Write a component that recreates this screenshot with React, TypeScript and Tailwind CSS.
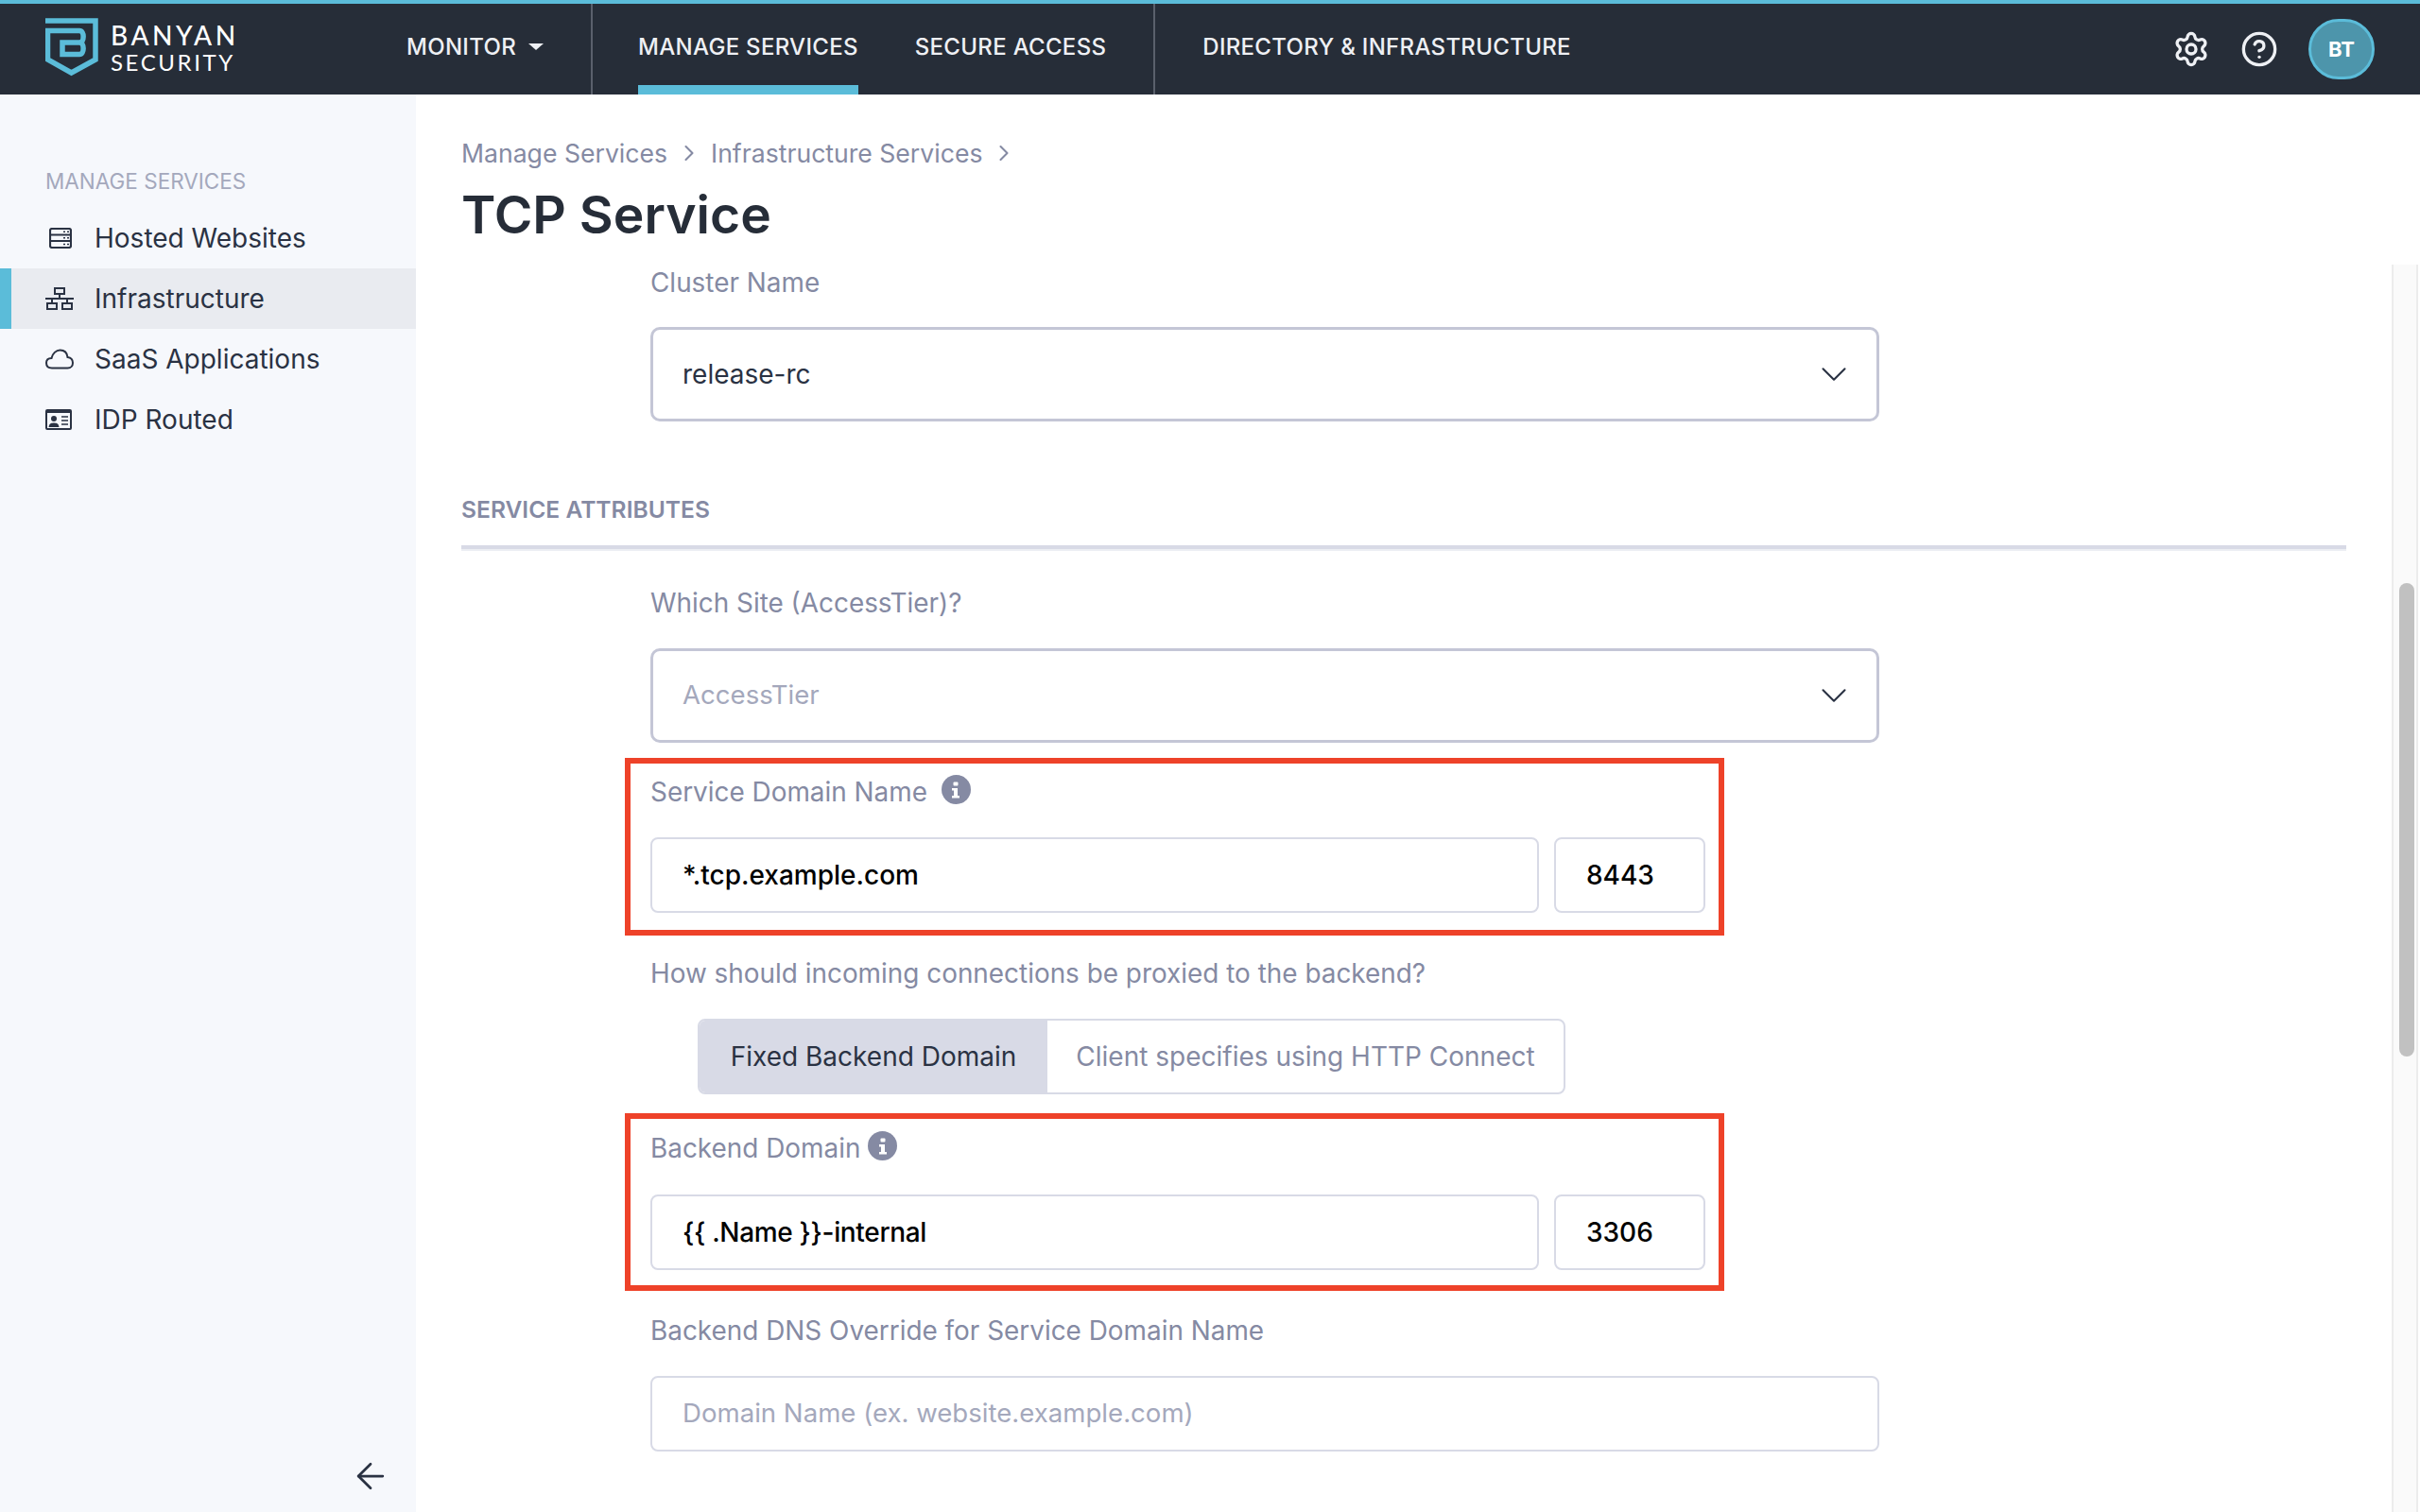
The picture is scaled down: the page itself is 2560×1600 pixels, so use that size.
import React from "react";
import { ChevronDown, ChevronRight, ArrowLeft, Settings, CircleHelp } from "lucide-react";

function Logo() {
  return (
    <svg width="56" height="62" viewBox="0 0 56 62" fill="none" className="shrink-0">
      <path d="M0 3H53V44L27.500 58L2.500 44V11" stroke="#5bbcd9" strokeWidth="5.500" fill="none" />
      <path d="M0 13.500H36C41.500 13.500 41.500 26 36 26H18V38.500H36C41.500 38.500 41.500 26 36 26" stroke="#5bbcd9" strokeWidth="5.500" fill="none" />
    </svg>
  );
}

function ServerIcon() {
  return (
    <svg width="24" height="22" viewBox="0 0 24 22" fill="none" stroke="#2a3243" strokeWidth="2.200" className="ml-[4px]">
      <rect x="1" y="1" width="22" height="20" rx="2" />
      <path d="M1 7.500H23M1 14H23" />
      <path d="M15 4.200h2M19 4.200h2M15 10.800h2M19 10.800h2M15 17.500h2M19 17.500h2" strokeWidth="1.600" />
    </svg>
  );
}

function NetworkIcon() {
  return (
    <svg width="30" height="24" viewBox="0 0 30 24" fill="none" stroke="#2a3243" strokeWidth="2">
      <rect x="10" y="1" width="10" height="6" />
      <rect x="2" y="17" width="10" height="6" />
      <rect x="18" y="17" width="10" height="6" />
      <path d="M15 7V12M0 12H30M7 12V17M23 12V17" />
    </svg>
  );
}

function CloudIcon() {
  return (
    <svg width="30" height="22" viewBox="0 0 30 22" fill="none" stroke="#2a3243" strokeWidth="2">
      <path d="M7 20.500C3 20.500 1 18 1 15C1 12 3 10 6.500 10C7.500 5 11.500 1.500 15.500 1.500C20 1.500 23 4.500 23.500 9C27 9.500 29 12 29 15C29 18 27 20.500 23.500 20.500Z" />
    </svg>
  );
}

function IdIcon() {
  return (
    <svg width="28" height="22" viewBox="0 0 28 22">
      <path fillRule="evenodd" fill="#2a3243" d="M2 0H26A2 2 0 0 1 28 2V20A2 2 0 0 1 26 22H2A2 2 0 0 1 0 20V2A2 2 0 0 1 2 0ZM2 4V20H26V4Z" />
      <circle cx="9" cy="10" r="3" fill="#2a3243" />
      <path d="M3.500 19C4 15 6.500 14.500 9 14.500S14 15 14.500 19Z" fill="#2a3243" />
      <path d="M17 8H24M17 12H24M17 16H24" stroke="#2a3243" strokeWidth="1.600" />
    </svg>
  );
}

function InfoDot() {
  return (
    <span className="flex h-[31px] w-[31px] shrink-0 items-center justify-center rounded-full bg-[#858aa3]">
      <svg width="12" height="18" viewBox="0 0 12 18" fill="#fff">
        <rect x="3.500" y="0.500" width="5" height="4" rx="1" />
        <path d="M2 7H8V15H10V17.500H2V15H4V9.500H2Z" />
      </svg>
    </span>
  );
}

function NavItem({ label, active }: { label: string; active?: boolean }) {
  return (
    <div className="relative flex h-full items-center whitespace-nowrap pb-[5px] text-[24px] font-medium tracking-[0.3px] text-[#eef0f4]">
      {label}
      {active && <span className="absolute inset-x-0 bottom-0 h-[10px] bg-[#5bbcd9]" />}
    </div>
  );
}

function SideItem({ icon, label, active }: { icon: React.ReactNode; label: string; active?: boolean }) {
  return (
    <div className={`flex h-16 items-center ${active ? "bg-[#e9ebf0]" : ""}`}>
      <span className={`h-full w-3 shrink-0 ${active ? "bg-[#5bbcd9]" : ""}`} />
      <span className="flex w-[88px] shrink-0 items-center pl-9">{icon}</span>
      <span className="text-[28px] text-[#2a3243]">{label}</span>
    </div>
  );
}

function Label({ children }: { children: React.ReactNode }) {
  return <div className="text-[27.900px] leading-[36px] text-[#858aa3]">{children}</div>;
}

function Select({ value, placeholder }: { value: string; placeholder?: boolean }) {
  return (
    <div className={`flex h-[100px] w-[1300px] items-center justify-between rounded-[10px] border-[3px] border-[#c4c6d6] pl-[31px] pr-[22px] ${placeholder ? "text-[27.600px] text-[#a4a8bc]" : "text-[28px] text-[#2a3243]"}`}>
      <span>{value}</span>
      <ChevronDown size={46} strokeWidth={1.100} className="text-[#2a3243]" />
    </div>
  );
}

function Field({ value, className }: { value: string; className: string }) {
  return (
    <div className={`flex h-[80px] items-center rounded-[8px] border-2 border-[#d8dae6] pl-[32px] text-[28px] font-medium text-black ${className}`}>
      {value}
    </div>
  );
}

function RedBox({ info, value, port, className, valueClass }: { info: React.ReactNode; value: string; port: string; className: string; valueClass: string }) {
  return (
    <div className={`ml-[173px] flex h-[188px] w-[1163px] flex-col border-[6px] border-[#ee4229] pl-[21px] ${className}`}>
      {info}
      <div className="flex gap-4">
        <Field value={value} className={`w-[940px] ${valueClass}`} />
        <Field value={port} className="w-[160px]" />
      </div>
    </div>
  );
}

export default function App() {
  return (
    <div className="flex h-[1600px] w-[2560px] flex-col overflow-hidden bg-white font-['Inter',sans-serif]">
      <header className="flex h-[100px] shrink-0 items-stretch border-t-4 border-[#5bbcd9] bg-[#262d38]">
        <div className="flex w-[430px] shrink-0 items-center gap-[13px] pb-[5px] pl-[48px]">
          <Logo />
          <div className="pt-[2px] font-['Lato',sans-serif] text-white">
            <div className="text-[28px] font-medium leading-[30px] tracking-[3.500px]">BANYAN</div>
            <div className="text-[24px] leading-[28px] tracking-[2.600px]">SECURITY</div>
          </div>
        </div>
        <div className="flex w-[195px] shrink-0 items-center gap-[13px]">
          <NavItem label="MONITOR" />
          <span className="mb-[5px] h-0 w-0 border-x-[8px] border-t-[7px] border-x-transparent border-t-[#eef0f4]" />
        </div>
        <div className="flex shrink-0 gap-[60px] border-l-2 border-r-2 border-[#5a606c] pl-[48px] pr-[50px]">
          <NavItem label="MANAGE SERVICES" active />
          <NavItem label="SECURE ACCESS" />
        </div>
        <div className="ml-[50px]">
          <NavItem label="DIRECTORY & INFRASTRUCTURE" />
        </div>
        <div className="ml-auto flex items-center gap-[32px] pr-[48px]">
          <Settings size={40} strokeWidth={2} className="text-[#eef0f4]" />
          <CircleHelp size={40} strokeWidth={2} className="text-[#eef0f4]" />
          <div className="flex h-[64px] w-[70px] items-center justify-center rounded-full border-[3px] border-[#5bbcd9] bg-[#4d95ab] text-[22px] font-bold text-white">
            BT
          </div>
        </div>
      </header>

      <div className="flex min-h-0 flex-1">
        <aside className="flex w-[440px] shrink-0 flex-col bg-[#f6f8fc]">
          <div className="pb-[14px] pl-12 pt-[78px] text-[22.500px] leading-[28px] text-[#a4a8bc]">MANAGE SERVICES</div>
          <SideItem icon={<ServerIcon />} label="Hosted Websites" />
          <SideItem icon={<NetworkIcon />} label="Infrastructure" active />
          <SideItem icon={<CloudIcon />} label="SaaS Applications" />
          <SideItem icon={<IdIcon />} label="IDP Routed" />
          <div className="mt-auto flex justify-end pb-[16px] pr-[26px]">
            <ArrowLeft size={44} strokeWidth={1.500} className="text-[#2a3243]" />
          </div>
        </aside>

        <main className="relative min-w-0 flex-1 pl-12">
          <div className="flex items-center gap-[9px] pt-[44px] text-[26.600px] leading-[36px] text-[#858aa3]">
            <span>Manage Services</span>
            <ChevronRight size={28} strokeWidth={1.800} />
            <span>Infrastructure Services</span>
            <ChevronRight size={28} strokeWidth={1.800} />
          </div>
          <h1 className="pt-[11px] text-[55.200px] font-semibold leading-[72px] text-[#262d38]">TCP Service</h1>

          <div className="pl-[200px] pt-[18px]">
            <Label>Cluster Name</Label>
            <div className="pt-[29px]">
              <Select value="release-rc" />
            </div>
          </div>

          <div className="pt-[77px] text-[24.600px] font-semibold leading-[32px] text-[#858aa3]">SERVICE ATTRIBUTES</div>
          <div className="mt-[22px] h-[6px] w-[1994px] border-b-[2px] border-[#eceef3] bg-[#d8dae6]" />

          <div className="pl-[200px] pt-[37px]">
            <Label>Which Site (AccessTier)?</Label>
            <div className="pt-[30px]">
              <Select value="AccessTier" placeholder />
            </div>
          </div>

          <RedBox
            className="mt-[16px]"
            valueClass=""
            value="*.tcp.example.com"
            port="8443"
            info={
              <div className="flex h-[78px] items-start gap-[15px] pt-[12px]">
                <Label>Service Domain Name</Label>
                <InfoDot />
              </div>
            }
          />

          <div className="pl-[200px] pt-[22px]">
            <Label>How should incoming connections be proxied to the backend?</Label>
            <div className="ml-[50px] mt-[30px] flex h-[80px] w-[918px] overflow-hidden rounded-[8px] border-2 border-[#d8dae6] text-[28px]">
              <div className="flex w-[368px] items-center justify-center bg-[#d8dae6] text-[#2a3243]">Fixed Backend Domain</div>
              <div className="flex flex-1 items-center justify-center text-[#858aa3]">Client specifies using HTTP Connect</div>
            </div>
          </div>

          <RedBox
            className="mt-[20px]"
            valueClass="tracking-[-0.330px]"
            value="{{ .Name }}-internal"
            port="3306"
            info={
              <div className="flex h-[80px] items-start gap-[8px] pt-[13px]">
                <Label>Backend Domain</Label>
                <InfoDot />
              </div>
            }
          />

          <div className="pl-[200px] pt-[24px]">
            <Label>Backend DNS Override for Service Domain Name</Label>
            <div className="mt-[30px] flex h-[80px] w-[1300px] items-center rounded-[8px] border-2 border-[#d8dae6] pl-[32px] text-[27.600px] text-[#a4a8bc]">
              Domain Name (ex. website.example.com)
            </div>
          </div>

          <div className="absolute bottom-0 right-[2px] top-[180px] w-[28px] border-x-2 border-[#ececec] bg-[#fafafa]">
            <div className="absolute left-[6px] top-[337px] h-[501px] w-[16px] rounded-full bg-[#c1c1c1]" />
          </div>
        </main>
      </div>
    </div>
  );
}
